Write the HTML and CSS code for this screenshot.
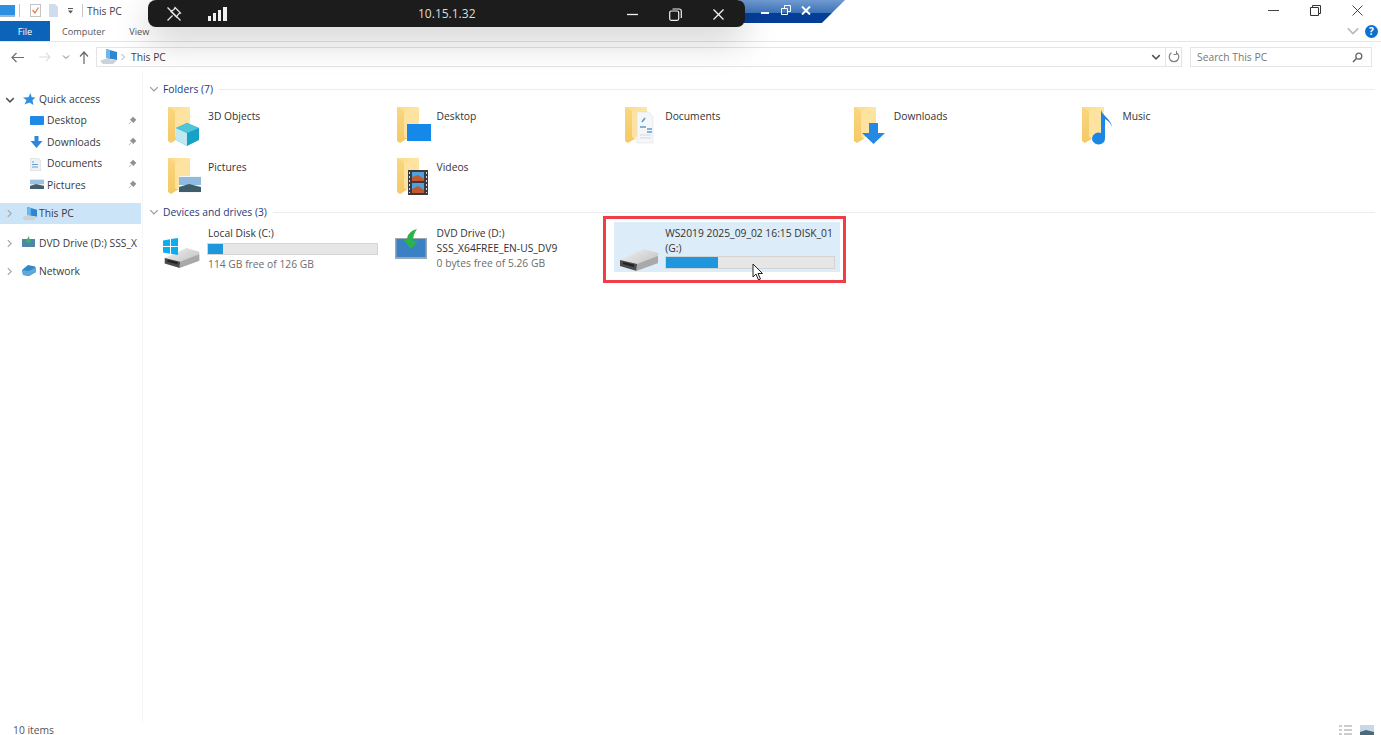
FILE: index.html
```html
<!DOCTYPE html>
<html lang="en">
<head>
<meta charset="utf-8">
<title>This PC</title>
<link rel="stylesheet" href="styles.css">
</head>
<body>
<svg class="defs" width="0" height="0" aria-hidden="true">
  <defs>
    <linearGradient id="fb" x1="0" y1="0" x2="1" y2="0"><stop offset="0" stop-color="#fbdc8e"/><stop offset="1" stop-color="#fde6a6"/></linearGradient>
    <linearGradient id="ff" x1="0" y1="0" x2="0" y2="1"><stop offset="0" stop-color="#f9d67f"/><stop offset="1" stop-color="#f5c965"/></linearGradient>
    <linearGradient id="dr" x1="0" y1="0" x2="1" y2="1"><stop offset="0" stop-color="#f2f2f2"/><stop offset="1" stop-color="#b9b9b9"/></linearGradient>
    <symbol id="folder" viewBox="0 0 40 40">
      <path d="M3 2H25V32H3Z" fill="url(#fb)"/>
      <path d="M3 2L10 6V32L14 33L6 38L3 36Z" fill="url(#ff)"/>
      <path d="M10 6H25V32H10Z" fill="#fde2a0"/>
    </symbol>
    <symbol id="drive" viewBox="0 0 38 22">
      <path d="M0 11L24 0L38 4V14L16 22L0 17Z" fill="url(#dr)"/>
      <path d="M0 11L17 15V22L0 17Z" fill="#4a4a4a"/>
      <path d="M3 13L14 15.500V18L3 15Z" fill="#222"/>
      <path d="M17 15L38 7V14L16 22Z" fill="#a9a9a9"/>
    </symbol>
    <symbol id="pin" viewBox="0 0 10 10">
      <path d="M5.500 1L9 4.500L7.800 5L6 7.500L2.500 4L5 2.200ZM3.600 6.200L1 9" fill="#8f8f8f" stroke="#8f8f8f" stroke-width=".7"/>
    </symbol>
    <symbol id="chev-r" viewBox="0 0 8 8"><path d="M2.500 1L5.500 4L2.500 7" fill="none" stroke="#a6a6a6" stroke-width="1"/></symbol>
    <symbol id="chev-d" viewBox="0 0 8 8"><path d="M1 2.500L4 5.500L7 2.500" fill="none" stroke="currentColor" stroke-width="1"/></symbol>
    <symbol id="pc" viewBox="0 0 18 16">
      <path d="M6 0L17 3V11L6 9Z" fill="#2f86d0"/>
      <path d="M6 0L10 1V9.600L6 9Z" fill="#6bb8ee"/>
      <path d="M0 12L6 9.500L17 11.500L13 15L3 15Z" fill="#cdd2d7"/>
    </symbol>
  </defs>
</svg>

<div class="window">
  <header class="titlebar">
    <svg class="tb-monitor" width="16" height="14" viewBox="0 0 16 14"><rect width="15" height="10" y="1" fill="#2d8fe0"/><rect y="11" width="15" height="2" fill="#9fb7cc"/></svg>
    <span class="sep"></span>
    <svg class="tb-check" width="11" height="13" viewBox="0 0 11 13"><rect x=".5" y=".5" width="10" height="12" fill="#fff" stroke="#c4c4c4"/><path d="M2.500 6L5 9L8.500 3.500" fill="none" stroke="#e2764a" stroke-width="1.200"/></svg>
    <svg class="tb-doc" width="9" height="13" viewBox="0 0 9 13"><path d="M0 0H6L9 3V13H0Z" fill="#cfdcec"/></svg>
    <svg class="tb-drop" width="7" height="6" viewBox="0 0 7 6"><rect x="1" y="0" width="5" height="1" fill="#555"/><path d="M1 2.500H6L3.500 5.500Z" fill="#555"/></svg>
    <span class="sep sep-2"></span>
    <span class="tb-title">This PC</span>
    <div class="win-controls">
      <svg width="11" height="11" viewBox="0 0 11 11"><path d="M0 5.500H11" stroke="#444"/></svg>
      <svg width="11" height="11" viewBox="0 0 11 11"><path d="M.5 2.500H8.500V10.500H.5ZM2.500 2.500V.5H10.500V8.500H8.500" fill="none" stroke="#333"/></svg>
      <svg width="11" height="11" viewBox="0 0 11 11"><path d="M.5.5L10.500 10.500M10.500.5L.5 10.500" stroke="#444"/></svg>
    </div>
  </header>

  <nav class="ribbon">
    <span class="tab tab-file">File</span>
    <span class="tab tab-computer">Computer</span>
    <span class="tab tab-view">View</span>
    <svg class="rb-chev" width="14" height="14"><use href="#chev-d"/></svg>
    <span class="help">?</span>
  </nav>

  <div class="addressbar">
    <svg class="nav-back" width="13" height="11" viewBox="0 0 13 11"><path d="M13 5.500H1M5.500 1L1 5.500L5.500 10" fill="none" stroke="#6e6e6e" stroke-width="1.200"/></svg>
    <svg class="nav-fwd" width="12" height="10" viewBox="0 0 13 11"><path d="M0 5.500H12M7.500 1L12 5.500L7.500 10" fill="none" stroke="#dcdcdc" stroke-width="1.200"/></svg>
    <svg class="nav-recent" width="8" height="8"><use href="#chev-d"/></svg>
    <svg class="nav-up" width="10" height="13" viewBox="0 0 10 13"><path d="M5 13V1M1 5.500L5 1L9 5.500" fill="none" stroke="#666" stroke-width="1.200"/></svg>
    <div class="pathbox">
      <svg class="path-pc" width="18" height="16"><use href="#pc"/></svg>
      <svg class="path-sep" width="8" height="8"><use href="#chev-r"/></svg>
      <span class="path-text">This PC</span>
      <svg class="path-drop" width="10" height="10" viewBox="0 0 8 8"><path d="M1 2.500L4 5.500L7 2.500" fill="none" stroke="#555" stroke-width="1.200"/></svg>
      <span class="path-refresh">
        <svg width="12" height="12" viewBox="0 0 12 12"><path d="M8.500 1.800A4.800 4.800 0 1 1 3.500 1.800" fill="none" stroke="#808080" stroke-width="1.200"/><path d="M8.500 0V3.500H5.500" fill="none" stroke="#808080" stroke-width="1"/></svg>
      </span>
    </div>
    <div class="searchbox">
      <span>Search This PC</span>
      <svg width="11" height="11" viewBox="0 0 11 11"><circle cx="6.800" cy="4.200" r="3" fill="none" stroke="#666" stroke-width="1.300"/><path d="M4.700 6.300L1 10" stroke="#666" stroke-width="1.600"/></svg>
    </div>
  </div>

  <div class="main">
    <aside class="sidebar">
      <div class="nav-row lvl1 first">
        <svg class="twisty tw-open" width="10" height="10" viewBox="0 0 8 8"><path d="M1 2.500L4 5.500L7 2.500" fill="none" stroke="#555" stroke-width="1.200"/></svg>
        <svg class="nav-ico" width="14" height="14" viewBox="0 0 14 14"><path d="M8.500 1L9.700 5.300L13.500 5.600L10.500 8.300L11.500 13L7.500 10.400L2.500 12.500L4.500 8.300L1 5.600L6.500 5.300Z" fill="#2d8fe0"/></svg>
        <span>Quick access</span>
      </div>
      <div class="nav-row lvl2">
        <svg class="nav-ico" width="14" height="11" viewBox="0 0 14 11"><rect width="14" height="9" y="1" rx="1" fill="#1e8ae6"/></svg>
        <span>Desktop</span><svg class="pin" width="9" height="9"><use href="#pin"/></svg>
      </div>
      <div class="nav-row lvl2">
        <svg class="nav-ico" width="13" height="12" viewBox="0 0 13 12"><path d="M4.500 0H8.500V5H12.500L6.500 12L.5 5H4.500Z" fill="#2f86dc"/></svg>
        <span>Downloads</span><svg class="pin" width="9" height="9"><use href="#pin"/></svg>
      </div>
      <div class="nav-row lvl2">
        <svg class="nav-ico" width="11" height="13" viewBox="0 0 11 13"><path d="M0 0H7.500L11 3V13H0Z" fill="#eef1f5" stroke="#c8cdd3" stroke-width=".6"/><path d="M2 4H4M2 6.500H8M2 9H8" stroke="#6a9ccc"/></svg>
        <span>Documents</span><svg class="pin" width="9" height="9"><use href="#pin"/></svg>
      </div>
      <div class="nav-row lvl2">
        <svg class="nav-ico" width="14" height="11" viewBox="0 0 14 11"><rect width="14" height="10" fill="#dfe8f0"/><rect y="1" width="14" height="4" fill="#9cc2e2"/><path d="M0 7L6 5L14 7V10H0Z" fill="#45606c"/></svg>
        <span>Pictures</span><svg class="pin" width="9" height="9"><use href="#pin"/></svg>
      </div>
      <div class="nav-row lvl1 selected">
        <svg class="twisty" width="9" height="9"><use href="#chev-r"/></svg>
        <svg class="nav-ico" width="16" height="14"><use href="#pc"/></svg>
        <span>This PC</span>
      </div>
      <div class="nav-row lvl1 dvd-row">
        <svg class="twisty" width="9" height="9"><use href="#chev-r"/></svg>
        <svg class="nav-ico" width="13" height="11" viewBox="0 0 13 11"><rect y="3" width="13" height="8" fill="#4f86a8"/><path d="M7 0L3.500 5.500L8 7L9 4L7.500 3.500Z" fill="#3db36a"/></svg>
        <span class="dvd-label">DVD Drive (D:) SSS_X</span>
      </div>
      <div class="nav-row lvl1 net-row">
        <svg class="twisty" width="9" height="9"><use href="#chev-r"/></svg>
        <svg class="nav-ico" width="14" height="12" viewBox="0 0 14 12"><path d="M6 0L13 1.500L14 7L7 11L1 10L0 5Z" fill="#2f86c8"/><path d="M0 5L7 6L14 2V7L7 11L1 10Z" fill="#5fa8da"/></svg>
        <span>Network</span>
      </div>
    </aside>

    <section class="content">
      <div class="group-head">
        <svg class="group-chev" width="10" height="10"><use href="#chev-d"/></svg>
        <span>Folders (7)</span><i></i>
      </div>
      <div class="tiles folders">
        <div class="tile">
          <div class="ico">
            <svg width="40" height="40"><use href="#folder"/></svg>
            <svg class="badge" width="40" height="40" viewBox="0 0 40 40"><path d="M11 23L22 18L34 23V35L22 41L11 35Z" fill="#16a1c7"/><path d="M11 23L22 28V41L11 35Z" fill="#bfe8ef"/><path d="M22 18L34 23L22 28L11 23Z" fill="#4fc5dc"/></svg>
          </div>
          <span>3D Objects</span>
        </div>
        <div class="tile">
          <div class="ico">
            <svg width="40" height="40"><use href="#folder"/></svg>
            <svg class="badge" width="40" height="40" viewBox="0 0 40 40"><rect x="13" y="19" width="24" height="17" fill="#1489ea"/></svg>
          </div>
          <span>Desktop</span>
        </div>
        <div class="tile">
          <div class="ico">
            <svg width="40" height="40"><use href="#folder"/></svg>
            <svg class="badge" width="40" height="40" viewBox="0 0 40 40"><path d="M15 7H27L31 11V38H15Z" fill="#f4f6f8" stroke="#dfe3e8" stroke-width=".6"/><path d="M20 17L23 13M18 22H24M25 24H30M25 27H30" stroke="#5e9ad0" stroke-width="1.600"/><path d="M18 30H29M18 33H29" stroke="#d3d9e0"/></svg>
          </div>
          <span>Documents</span>
        </div>
        <div class="tile">
          <div class="ico">
            <svg width="40" height="40"><use href="#folder"/></svg>
            <svg class="badge" width="40" height="40" viewBox="0 0 40 40"><path d="M18 18H27V28H34L22.500 39L11 28H18Z" fill="#2488e4"/></svg>
          </div>
          <span>Downloads</span>
        </div>
        <div class="tile">
          <div class="ico">
            <svg width="40" height="40"><use href="#folder"/></svg>
            <svg class="badge" width="40" height="40" viewBox="0 0 40 40"><path d="M26 9V33A6.500 6 0 1 1 22 28V5C23 10 32 14 33 22C31 17 28 15 26 14Z" fill="#1c86e4"/></svg>
          </div>
          <span>Music</span>
        </div>
        <div class="tile">
          <div class="ico">
            <svg width="40" height="40"><use href="#folder"/></svg>
            <svg class="badge" width="40" height="40" viewBox="0 0 40 40"><rect x="14" y="20" width="22" height="17" fill="#f4f7fa"/><rect x="14" y="21" width="22" height="8" fill="#8fbbe0"/><path d="M14 31L24 28L36 31V36H14Z" fill="#3f5e6a"/></svg>
          </div>
          <span>Pictures</span>
        </div>
        <div class="tile">
          <div class="ico">
            <svg width="40" height="40"><use href="#folder"/></svg>
            <svg class="badge" width="40" height="40" viewBox="0 0 40 40"><rect x="14" y="14" width="20" height="25" fill="#3a3a40"/><rect x="18" y="16" width="12" height="9" fill="#4da3e0"/><rect x="18" y="27" width="12" height="10" fill="#4da3e0"/><path d="M18 21L24 19L30 23V25H18ZM18 33L24 30L30 34V37H18Z" fill="#c4572d"/><path d="M15.500 16V37M32.500 16V37" stroke="#ddd" stroke-dasharray="2 2"/></svg>
          </div>
          <span>Videos</span>
        </div>
      </div>

      <div class="group-head group-2">
        <svg class="group-chev" width="10" height="10"><use href="#chev-d"/></svg>
        <span>Devices and drives (3)</span><i></i>
      </div>
      <div class="tiles drives">
        <div class="tile drive">
          <div class="ico">
            <svg class="drive-ico" width="38" height="20"><use href="#drive"/></svg>
            <svg class="win-logo" width="15" height="17" viewBox="0 0 15 17"><path d="M0 2.500L7 1.300V8H0ZM8 1.100L15 0V8H8ZM0 9H7V15.700L0 14.500ZM8 9H15V17L8 15.800Z" fill="#08aeee"/></svg>
          </div>
          <div class="meta">
            <div>Local Disk (C:)</div>
            <div class="bar"><b class="fill" style="width:9%"></b></div>
            <div class="free">114 GB free of 126 GB</div>
          </div>
        </div>
        <div class="tile drive">
          <div class="ico">
            <svg class="dvd-ico" width="32" height="30" viewBox="0 0 32 30">
              <rect x="0" y="9" width="32" height="21" fill="#9aa8b4"/>
              <rect x="1.500" y="10" width="29" height="18" fill="#3a80c4"/>
              <path d="M22 0C15 2 12 6 12 11L8 10L16 20L23 12L18 12C18 8 19 4 22 0Z" fill="#2bb34a"/>
            </svg>
          </div>
          <div class="meta">
            <div>DVD Drive (D:)</div>
            <div>SSS_X64FREE_EN-US_DV9</div>
            <div class="free">0 bytes free of 5.26 GB</div>
          </div>
        </div>
        <div class="tile drive active">
          <div class="ico">
            <svg class="drive-g" width="38" height="22"><use href="#drive"/></svg>
          </div>
          <div class="meta">
            <div>WS2019 2025_09_02 16:15 DISK_01</div>
            <div>(G:)</div>
            <div class="bar bar-g"><b class="fill" style="width:31%"></b></div>
          </div>
          <svg class="cursor" width="12" height="18" viewBox="0 0 12 18"><path d="M1 1V14L4 11L6.500 17L8.500 16L6 10.500H10.500Z" fill="#fff" stroke="#222" stroke-width="1"/></svg>
        </div>
      </div>
    </section>
  </div>

  <footer class="statusbar">
    <span>10 items</span>
    <div class="views">
      <svg width="13" height="10" viewBox="0 0 13 10"><path d="M0 1H3M0 5H3M0 9H3M5 1H13M5 5H13M5 9H13" stroke="#9a9a9a"/></svg>
      <svg width="14" height="10" viewBox="0 0 14 10"><rect width="14" height="10" fill="#c8d8e8"/><path d="M0 7L6 5L14 7V10H0Z" fill="#4a6a7a"/></svg>
    </div>
  </footer>
</div>

<div class="blue-caption">
  <svg width="11" height="9" viewBox="0 0 11 9"><path d="M0 7H8" stroke="#fff" stroke-width="2"/></svg>
  <svg width="11" height="11" viewBox="0 0 11 11"><path d="M.5 3.500H6.500V9.500H.5ZM3.500 3.500V.5H9.500V6.500H6.500" fill="none" stroke="#fff"/></svg>
  <svg width="10" height="9" viewBox="0 0 10 9"><path d="M1 .5L9 8.500M9 .5L1 8.500" stroke="#fff" stroke-width="2"/></svg>
</div>

<div class="remote-bar">
  <svg class="rb-unpin" width="16" height="16" viewBox="0 0 16 16"><path d="M9 1.500L14.500 7L12.500 8L10.500 11L5 5.500L8 3.500ZM6.500 9.500L1.500 14.500M1.500 1.500L14.500 14.500" fill="none" stroke="#e4e4e4" stroke-width="1.300"/></svg>
  <svg class="rb-signal" width="19" height="14" viewBox="0 0 19 14"><rect y="9" width="3" height="5" fill="#f0f0f0"/><rect x="5" y="6" width="3" height="8" fill="#f0f0f0"/><rect x="10" y="3" width="3" height="11" fill="#f0f0f0"/><rect x="15" width="4" height="14" fill="#f0f0f0"/></svg>
  <span class="rb-ip">10.15.1.32</span>
  <svg class="rb-min" width="11" height="11" viewBox="0 0 11 11"><path d="M0 5.500H11" stroke="#f0f0f0" stroke-width="1.300"/></svg>
  <svg class="rb-max" width="13" height="13" viewBox="0 0 13 13"><rect x=".7" y="3" width="9" height="9.300" rx="1.500" fill="none" stroke="#f0f0f0" stroke-width="1.200"/><path d="M3.500 1H10.500A2 2 0 0 1 12.300 3V10" fill="none" stroke="#f0f0f0" stroke-width="1.200"/></svg>
  <svg class="rb-close" width="11" height="11" viewBox="0 0 11 11"><path d="M.5.5L10.500 10.500M10.500.5L.5 10.500" stroke="#f4f4f4" stroke-width="1.300"/></svg>
</div>

<div class="red-mark"></div>
</body>
</html>
```

FILE: styles.css
```css
* { box-sizing: border-box; }
html, body { margin: 0; height: 735px; overflow: hidden; background: #fff; }
body { font-family: "Open Sans", "Noto Sans", sans-serif; font-size: 10.3px; color: #333; position: relative; }
.defs { position: absolute; }
svg { display: block; flex: none; }

.window { height: 735px; display: flex; flex-direction: column; }

.titlebar { height: 21px; display: flex; align-items: center; flex: none; }
.tb-monitor { margin-left: 0; }
.sep { width: 1px; height: 13px; background: #c5c5c5; margin-left: 3px; }
.tb-check { margin-left: 10px; }
.tb-doc { margin-left: 8px; }
.tb-drop { margin-left: 9px; }
.sep-2 { margin-left: 8px; }
.tb-title { margin-left: 4px; color: #444; }
.win-controls { margin-left: auto; display: flex; gap: 31px; padding-right: 18px; }

.ribbon { height: 21px; display: flex; align-items: center; position: relative; border-bottom: 1px solid #e6e6e6; flex: none; }
.tab { font-size: 9.2px; color: #555; }
.tab-file { width: 50px; height: 20px; background: #0b64b8; color: #fff; display: flex; align-items: center; justify-content: center; }
.tab-computer { margin-left: 12px; }
.tab-view { margin-left: 24px; }
.rb-chev { margin-left: auto; color: #bbb; margin-right: 5px; }
.help { width: 13px; height: 13px; border-radius: 50%; background: #0d6fcf; color: #fff; font-size: 10px; font-weight: 700; line-height: 13px; text-align: center; margin-right: 3px; }

.addressbar { height: 29px; display: flex; align-items: center; flex: none; padding-top: 1px; }
.nav-back { margin-left: 11px; }
.nav-fwd { margin-left: 15px; }
.nav-recent { margin-left: 11px; color: #777; }
.nav-up { margin-left: 9px; }
.pathbox { margin-left: 7px; width: 1086px; height: 20px; border: 1px solid #e4e4e4; display: flex; align-items: center; }
.path-pc { margin-left: 3px; }
.path-sep { margin-left: 1px; }
.path-text { margin-left: 4px; color: #444; }
.path-drop { margin-left: auto; margin-right: 4px; }
.path-refresh { width: 16px; height: 18px; border-left: 1px solid #e4e4e4; display: flex; align-items: center; justify-content: center; }
.searchbox { margin-left: 8px; width: 182px; height: 20px; border: 1px solid #e4e4e4; display: flex; align-items: center; justify-content: space-between; padding: 0 8px 0 6px; color: #777; }

.main { flex: 1; min-height: 0; display: flex; }
.sidebar { width: 143px; flex: none; border-right: 1px solid #f6f6f6; padding-top: 17px; }
.nav-row { height: 21.5px; display: flex; align-items: center; position: relative; white-space: nowrap; overflow: hidden; color: #3a3a3a; }
.lvl1 { padding-left: 39px; }
.lvl2 { padding-left: 47px; }
.lvl1 .twisty { position: absolute; left: 5px; top: 6.5px; }
.lvl1 .nav-ico { position: absolute; left: 22px; top: 4px; }
.lvl2 .nav-ico { position: absolute; left: 30px; top: 5px; }
.pin { position: absolute; left: 128px; top: 6px; }
.selected { background: #cce4f7; width: 141px; margin-top: 7px; }
.dvd-row { margin-top: 8px; }
.net-row { margin-top: 7px; }

.content { flex: 1; min-width: 0; padding: 10px 6px 0 6px; }
.group-head { height: 16px; display: flex; align-items: center; color: #1e3a80; gap: 0; }
.group-head .group-chev { color: #9a9a9a; margin-right: 4px; margin-left: 0; }
.group-head i { flex: 1; height: 1px; background: #ececec; margin-left: 6px; }
.group-2 { margin-top: -1px; }

.tiles { display: grid; grid-template-columns: repeat(5, 228.6px); padding-left: 13px; }
.folders { margin-top: 6px; grid-auto-rows: 51px; }
.drives { margin-top: 2px; grid-template-columns: repeat(3, 228.6px); grid-auto-rows: 50px; }

.tile { display: flex; position: relative; color: #333; }
.folders .tile { padding-top: 5px; line-height: 16px; }
.ico { width: 46px; flex: none; position: relative; }
.folders .ico svg { position: absolute; left: 3px; top: -3px; }
.folders .ico .badge { overflow: visible; }

.drive { line-height: 15px; padding-top: 4px; }
.meta { flex: 1; min-width: 0; white-space: nowrap; }
.bar { width: 171px; height: 12px; margin: 2px 0 2px -1px; background: #e6e6e6; border: 1px solid #d4d4d4; }
.fill { display: block; height: 100%; background: #1f97dc; }
.free { color: #6d6d6d; }
.drive-ico { position: absolute; left: 1px; top: 22px; }
.win-logo { position: absolute; left: 1px; top: 12px; }
.dvd-ico { position: absolute; left: 4px; top: 3px; }

.active { background: #dcecf8; width: 226px; margin-left: -5px; }
.active .ico { width: 51px; }
.drive-g { position: absolute; left: 6px; top: 23px; }
.bar-g { width: 170px; height: 13px; margin: 0; }
.cursor { position: absolute; left: 138px; top: 41px; }

.statusbar { height: 13px; display: flex; align-items: center; justify-content: space-between; padding: 3px 7px 0 13px; flex: none; color: #555; }
.views { display: flex; gap: 8px; }

.blue-caption { position: absolute; left: 740px; top: 0; width: 105px; height: 23px; background: linear-gradient(#6f9ad0 0%, #3d74b8 55%, #053e98 56%, #053e98 100%); clip-path: polygon(0 0, 100% 0, 78% 100%, 0 100%); display: flex; align-items: center; gap: 9px; padding: 0 0 3px 21px; }

.remote-bar { position: absolute; left: 148px; top: 0; width: 597px; height: 27px; background: #1c1c1c; border-radius: 8px; box-shadow: 0 12px 36px rgba(0,0,0,.22); color: #ddd; }
.remote-bar svg, .rb-ip { position: absolute; }
.rb-unpin { left: 18px; top: 6px; }
.rb-signal { left: 60px; top: 7px; }
.rb-ip { left: 270px; top: 6px; font-size: 12px; line-height: 16px; }
.rb-min { left: 479px; top: 9px; }
.rb-max { left: 521px; top: 8px; }
.rb-close { left: 565px; top: 9px; }

.red-mark { position: absolute; left: 603px; top: 216px; width: 243px; height: 67px; border: 3px solid #ee3f48; }
```
